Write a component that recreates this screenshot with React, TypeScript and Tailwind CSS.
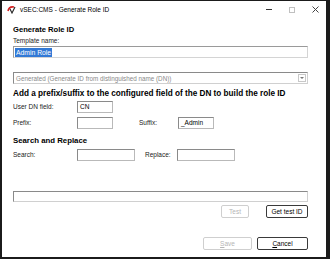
import { useState } from "react";

const font = { fontFamily: '"Liberation Sans", Arial, sans-serif' };

function Field({ value = "", w }: { value?: string; w: string }) {
  return (
    <div className={`${w} h-[12px] border border-[#b9b9b9] border-t-[#8a8a8a] border-l-[#8a8a8a] bg-white px-[2px] text-[6.5px] leading-[9px] text-black`}>
      {value}
    </div>
  );
}

function Btn({ label, disabled, w }: { label: React.ReactNode; disabled?: boolean; w: string }) {
  return (
    <div
      className={`${w} h-[13px] rounded-[2px] border flex items-center justify-center text-[6.5px] ${
        disabled ? "border-[#cfcfcf] text-[#b5b5b5]" : "border-[#3a3a3a] text-black"
      }`}
    >
      {label}
    </div>
  );
}

export default function App() {
  const [name] = useState("Admin Role");

  return (
    <div className="w-[330px] h-[259px] bg-[#1b1b1b] pt-px pl-[2px] pr-[4px] pb-[2px]" style={font}>
      <div className="w-full h-full bg-white flex flex-col">
        {/* Title bar */}
        <div className="h-[17px] flex items-center pl-[5px] pr-[7px]">
          <svg width="9" height="9" viewBox="0 0 9 9" className="mr-[4px]">
            <path d="M1 6 Q2 1 7 2" stroke="#d42020" strokeWidth="1.6" fill="none" />
            <path d="M3 4 L5 8 L8 2" stroke="#222" strokeWidth="1.1" fill="none" />
          </svg>
          <span className="text-[6.5px] text-black">vSEC:CMS - Generate Role ID</span>
          <div className="ml-auto flex items-center gap-[17px]">
            <div className="w-[6px] h-px bg-[#333]" />
            <div className="w-[6px] h-[6px] border border-[#c0c0c0]" />
            <svg width="7" height="7" viewBox="0 0 7 7">
              <path d="M0.5 0.5 L6.5 6.5 M6.5 0.5 L0.5 6.5" stroke="#444" strokeWidth="1" />
            </svg>
          </div>
        </div>

        <div className="flex-1 flex flex-col pl-[11px] pr-[18px]">
          <div className="mt-[7px] text-[7.6px] font-bold leading-[10px] text-black">Generate Role ID</div>
          <div className="mt-px text-[6.5px] leading-[9px] text-[#222]">Template name:</div>
          <div className="mt-px h-[12px] border border-[#d4d4d4] border-t-[#9a9a9a] border-l-[#9a9a9a] pl-[1px] flex items-center">
            <span className="bg-[#3279d6] text-white text-[6.8px] leading-[9px] px-[1px]">{name}</span>
          </div>

          <div className="mt-[14px] h-[12px] border border-[#8a8a8a] border-b-[#d0d0d0] border-r-[#d0d0d0] bg-white flex items-center pl-[2px] pr-[1px]">
            <span className="text-[6.3px] text-[#8a8a8a] leading-[9px]">Generated (Generate ID from distinguished name (DN))</span>
            <div className="ml-auto w-[8px] h-[8px] border border-[#c8c8c8] flex items-center justify-center">
              <div className="w-0 h-0 border-l-[2px] border-r-[2px] border-t-[2px] border-l-transparent border-r-transparent border-t-[#777]" />
            </div>
          </div>

          <div className="mt-[5px] text-[8.2px] font-bold leading-[10px] text-black">
            Add a prefix/suffix to the configured field of the DN to build the role ID
          </div>

          <div className="mt-[2px] flex items-center h-[12px]">
            <span className="w-[64px] text-[6.5px] text-[#222]">User DN field:</span>
            <Field value="CN" w="w-[36px]" />
          </div>

          <div className="mt-[4px] flex items-center h-[12px]">
            <span className="w-[64px] text-[6.5px] text-[#222]">Prefix:</span>
            <Field w="w-[36px]" />
            <span className="ml-[26px] w-[39px] text-[6.5px] text-[#222]">Suffix:</span>
            <Field value="_Admin" w="w-[36px]" />
          </div>

          <div className="mt-[7px] text-[7.8px] font-bold leading-[10px] text-black">Search and Replace</div>

          <div className="mt-[3px] flex items-center h-[12px]">
            <span className="w-[64px] text-[6.5px] text-[#222]">Search:</span>
            <Field w="w-[58px]" />
            <span className="ml-[10px] w-[32px] text-[6.5px] text-[#222]">Replace:</span>
            <Field w="w-[58px]" />
          </div>

          <div className="mt-[30px] h-[11px] border border-[#d0d0d0] border-t-[#8a8a8a] border-l-[#8a8a8a]" />

          <div className="mt-[3px] flex justify-end gap-[17px]">
            <Btn label="Test" disabled w="w-[28px]" />
            <Btn label="Get test ID" w="w-[42px]" />
          </div>

          <div className="mt-[19px] flex justify-end gap-[5px]">
            <Btn label={<><span className="underline">S</span>ave</>} disabled w="w-[49px]" />
            <Btn label={<><span className="underline">C</span>ancel</>} w="w-[51px]" />
          </div>
        </div>
      </div>
    </div>
  );
}
